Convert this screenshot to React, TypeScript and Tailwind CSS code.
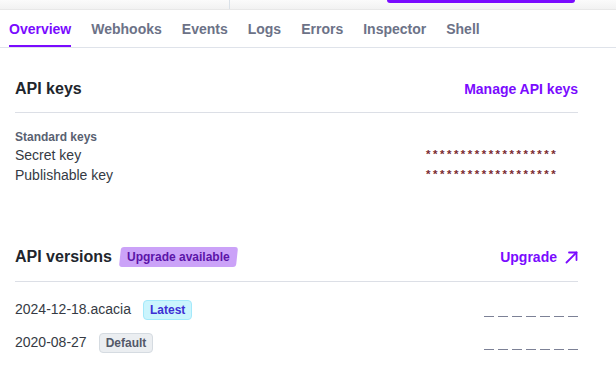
import React from "react";

const tabs = ["Overview", "Webhooks", "Events", "Logs", "Errors", "Inspector", "Shell"];

const Dashes = () => (
  <div className="flex gap-[4px] self-end mb-[9px]">
    {Array.from({ length: 7 }).map((_, i) => (
      <span key={i} className="block w-[10px] h-[1px] bg-[#7c8196]" />
    ))}
  </div>
);

const Stars = () => (
  <span className="pr-[21px] text-[11.6px] leading-[20px] font-bold text-[#7a2a30]" style={{ fontFamily: "'Liberation Mono', monospace" }}>
    *******************
  </span>
);

export default function App() {
  return (
    <div className="w-[616px] h-[381px] bg-white overflow-hidden text-[#353a44]" style={{ fontFamily: "'Liberation Sans', Arial, sans-serif" }}>
      {/* top strip */}
      <div className="h-[10px] flex items-start bg-gradient-to-b from-[#fbfbfb] to-[#f2f2f2] border-b border-[#e8e8e8]">
        <div className="w-[230px] h-full border-r border-[#dae1e8]" />
        <div className="ml-[157px] w-[188px] h-[3px] bg-[#7a0bff] rounded-b-[6px]" />
      </div>

      {/* tabs */}
      <div className="h-[38px] flex items-stretch gap-[20px] px-[9px] border-b border-[#dfe3ea]">
        {tabs.map((t, i) => (
          <div
            key={t}
            className={
              i === 0
                ? "flex items-center text-[14px] font-bold text-[#7a0bff] border-b-2 border-[#7a0bff] pt-[4px]"
                : "flex items-center text-[14px] font-bold text-[#6c7287] border-b-2 border-transparent pt-[4px]"
            }
          >
            {t}
          </div>
        ))}
      </div>

      <div className="pl-[15px] pr-[38px]">
        {/* API keys */}
        <div className="mt-[29px] h-[24px] flex items-center justify-between">
          <h2 className="text-[16px] font-bold text-[#21252c]">API keys</h2>
          <a className="text-[14px] font-bold text-[#7a0bff]">Manage API keys</a>
        </div>
        <div className="mt-[11px] border-t border-[#dcdfe6]" />

        <div className="mt-[16px] text-[12px] leading-[16px] font-bold text-[#596171]">Standard keys</div>
        <div className="flex justify-between items-center h-[20px] text-[14px]">
          <span>Secret key</span>
          <Stars />
        </div>
        <div className="flex justify-between items-center h-[20px] text-[14px]">
          <span>Publishable key</span>
          <Stars />
        </div>

        {/* API versions */}
        <div className="mt-[60px] h-[24px] flex items-center justify-between">
          <div className="flex items-center gap-[8px]">
            <h2 className="text-[16px] font-bold text-[#21252c]">API versions</h2>
            <span className="-skew-x-6 bg-[#cba2f8] rounded-[3px] px-[7px] h-[20px] flex items-center">
              <span className="skew-x-6 text-[12px] font-bold text-[#5b14a8]">Upgrade available</span>
            </span>
          </div>
          <a className="flex items-center gap-[8px] text-[14px] font-bold text-[#7a0bff]">
            Upgrade
            <svg width="13" height="13" viewBox="0 0 13 13" fill="none" stroke="currentColor" strokeWidth="1.8" strokeLinecap="round" strokeLinejoin="round">
              <path d="M1.5 11.5 L11.5 1.5" />
              <path d="M4 1.5 H11.5 V9" />
            </svg>
          </a>
        </div>
        <div className="mt-[12px] border-t border-[#dcdfe6]" />

        <div className="mt-[11px]">
          <div className="h-[33px] flex items-center justify-between">
            <div className="flex items-center gap-[12px] text-[14px]">
              <span>2024-12-18.acacia</span>
              <span className="h-[20px] px-[6px] flex items-center rounded-[4px] bg-[#cbf5fd] border border-[#a4e9fb] text-[12px] font-bold text-[#3d2fd4]">
                Latest
              </span>
            </div>
            <Dashes />
          </div>
          <div className="h-[33px] flex items-center justify-between">
            <div className="flex items-center gap-[12px] text-[14px]">
              <span>2020-08-27</span>
              <span className="h-[20px] px-[6px] flex items-center rounded-[4px] bg-[#ebeef1] border border-[#d5dbe1] text-[12px] font-bold text-[#545969]">
                Default
              </span>
            </div>
            <Dashes />
          </div>
        </div>
      </div>
    </div>
  );
}
